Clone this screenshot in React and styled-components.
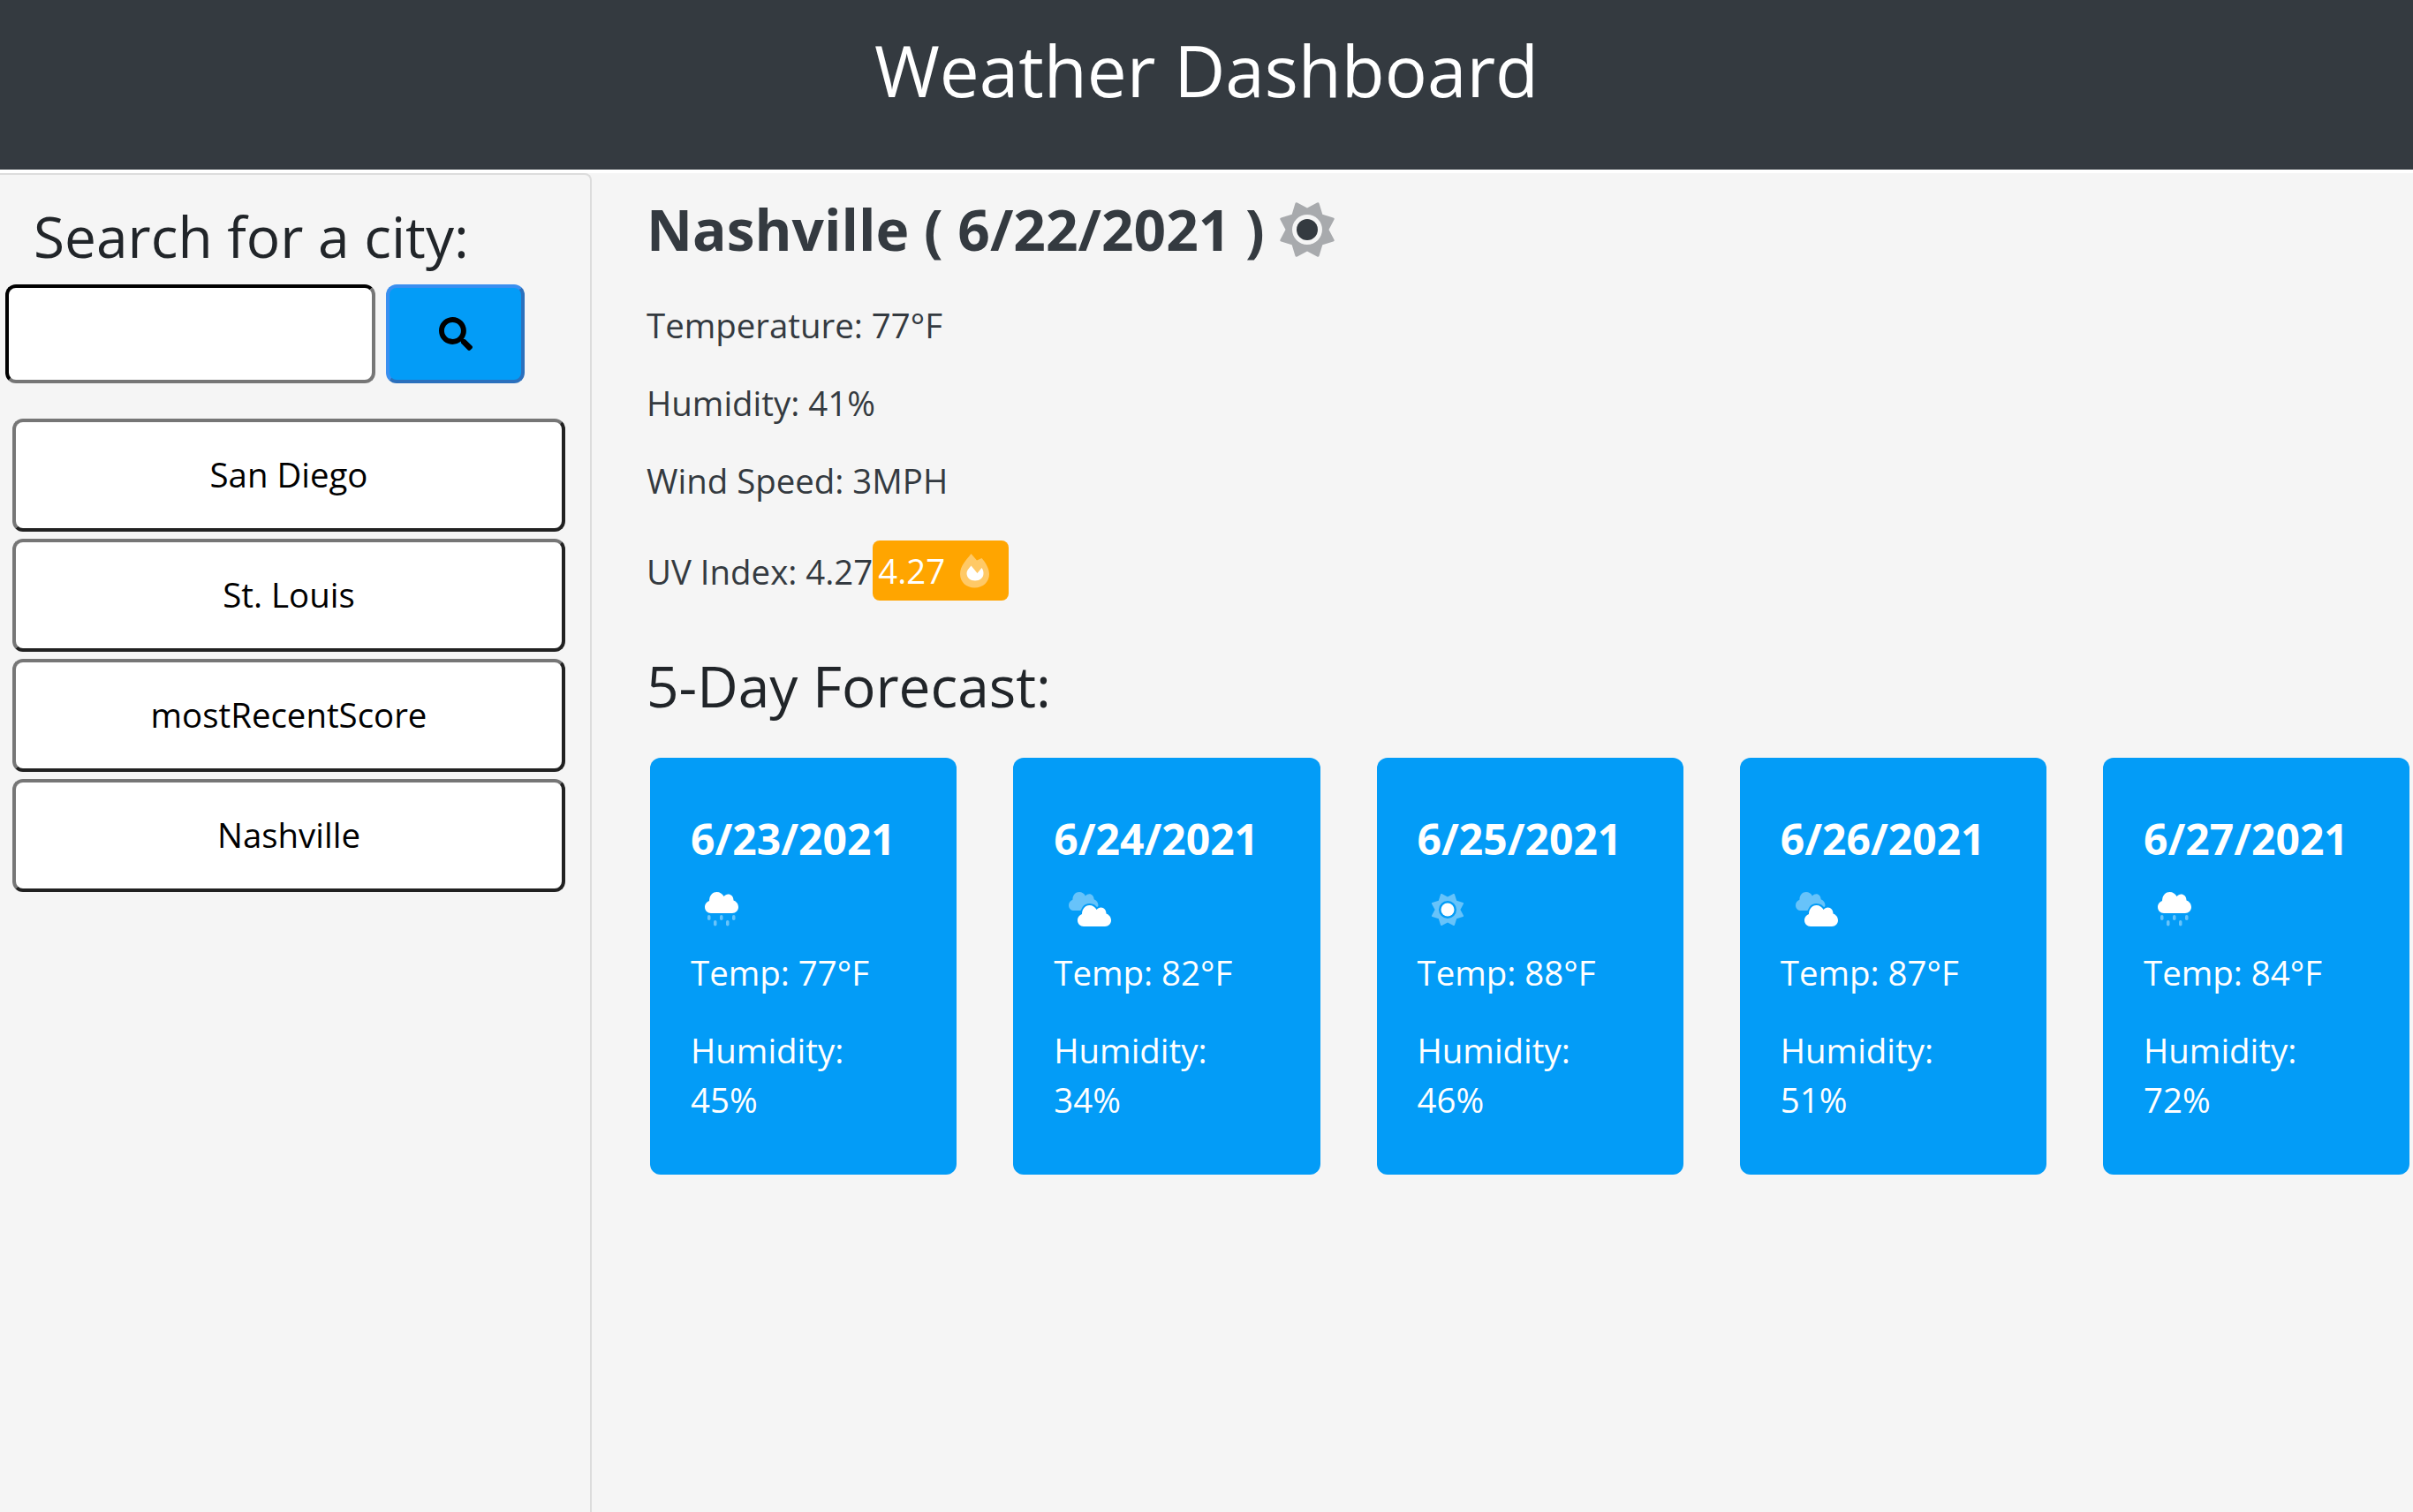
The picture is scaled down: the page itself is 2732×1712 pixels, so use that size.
import React from "react";
import styled, { createGlobalStyle } from "styled-components";
import { FaSearch } from "react-icons/fa";

const Global = createGlobalStyle`
  html, body { margin: 0; padding: 0; background: #fff; }
  body { font-family: "Open Sans", "Noto Sans", sans-serif; color: #343a40; }
  * { box-sizing: border-box; }
`;

const Page = styled.div`
  width: 2732px;
  height: 1712px;
  display: flex;
  flex-direction: column;
  overflow: hidden;
`;
const Header = styled.header`
  height: 192px;
  flex: none;
  background: #343a40;
  color: #fff;
  text-align: center;
  padding-top: 27px;
`;
const Title = styled.h1`
  margin: 0;
  font-size: 80px;
  line-height: 104px;
  font-weight: 400;
`;
const Body = styled.div`
  flex: 1;
  margin-top: 4px;
  display: flex;
  background: #f5f5f5;
  min-height: 0;
`;
const Sidebar = styled.aside`
  width: 670px;
  flex: none;
  border-top: 2px solid #dcdcdc;
  border-right: 2px solid #dcdcdc;
  border-top-right-radius: 8px;
  padding: 29px 0 0 6px;
`;
const SearchTitle = styled.h2`
  margin: 0 0 13px 32px;
  font-size: 64px;
  line-height: 82px;
  font-weight: 400;
  color: #212529;
`;
const SearchRow = styled.div`
  display: flex;
  gap: 12px;
`;
const SearchInput = styled.input`
  width: 419px;
  height: 112px;
  border-radius: 12px;
  border: 4px inset #767676;
  border-color: #212121 #767676 #767676 #212121;
  background: #fff;
`;
const SearchButton = styled.button`
  width: 157px;
  height: 112px;
  border-radius: 12px;
  border: 4px solid;
  border-color: #3a8ff0 #2b70bd #2b70bd #3a8ff0;
  background: #039cf7;
  display: flex;
  align-items: center;
  justify-content: center;
  color: #000;
  padding: 0;
`;
const CityList = styled.div`
  margin: 40px 0 0 8px;
  display: flex;
  flex-direction: column;
  gap: 8px;
`;
const CityButton = styled.button`
  width: 626px;
  height: 128px;
  border-radius: 12px;
  border: 4px solid;
  border-color: #767676 #212121 #212121 #767676;
  background: #fff;
  color: #000;
  font-family: inherit;
  font-size: 38.4px;
  padding: 0 0 2px;
`;
const Main = styled.main`
  flex: 1;
  min-width: 0;
  padding: 19px 0 0 62px;
`;
const CityHeading = styled.h2`
  margin: 0 0 35px;
  display: flex;
  align-items: center;
  gap: 14px;
  font-size: 64px;
  line-height: 90px;
  font-weight: 700;
  color: #343a40;
`;
const Stat = styled.p`
  margin: 0 0 32px;
  font-size: 38.4px;
  line-height: 56px;
`;
const UvRow = styled.div`
  display: flex;
  align-items: center;
  font-size: 38.4px;
  line-height: 68px;
  margin-top: 39px;
`;
const UvText = styled.span`
  padding-top: 2px;
`;
const Badge = styled.span`
  height: 68px;
  width: 154px;
  background: #ffa500;
  border-radius: 8px;
  color: #fff;
  display: flex;
  align-items: center;
  gap: 17px;
  padding: 0 0 0 6px;
  font-size: 38.4px;
`;
const ForecastTitle = styled.h3`
  margin: 57px 0 42px;
  font-size: 64px;
  line-height: 78px;
  font-weight: 400;
  color: #212529;
`;
const Cards = styled.div`
  display: flex;
  gap: 64px;
  margin-left: 4px;
`;
const Card = styled.article`
  width: 347.25px;
  height: 472px;
  flex: none;
  background: #039cf7;
  border-radius: 12px;
  color: #fff;
  padding: 60px 0 0 46px;
`;
const CardDate = styled.h5`
  margin: 0;
  font-size: 48px;
  line-height: 64px;
  font-weight: 700;
`;
const IconSlot = styled.div`
  height: 45px;
  margin: 28px 0 18px;
  display: flex;
  align-items: flex-start;
`;
const CardLine = styled.p`
  margin: 0 0 32px;
  font-size: 38.4px;
  line-height: 56px;
`;

function sunPath(size, R, r, hole) {
  const c = size / 2;
  const pts = [];
  for (let i = 0; i < 16; i++) {
    const a = ((i * 22.5 - 67.5) * Math.PI) / 180;
    const rad = i % 2 === 0 ? R : r;
    pts.push([c + rad * Math.cos(a), c + rad * Math.sin(a)]);
  }
  let d = "";
  for (let i = 0; i < 16; i += 2) {
    const tip = pts[i];
    const prev = pts[(i + 15) % 16];
    const next = pts[(i + 1) % 16];
    const lerp = (p, t) => [tip[0] + (p[0] - tip[0]) * t, tip[1] + (p[1] - tip[1]) * t];
    const a = lerp(prev, 0.14);
    const b = lerp(next, 0.14);
    d += `${i === 0 ? "M" : "L"}${a[0]} ${a[1]} Q${tip[0]} ${tip[1]} ${b[0]} ${b[1]} L${next[0]} ${next[1]} `;
  }
  d += `Z M${c - hole} ${c} a${hole} ${hole} 0 1 0 ${hole * 2} 0 a${hole} ${hole} 0 1 0 ${-hole * 2} 0 Z`;
  return d;
}

const Sun = ({ size, color, dot }) => (
  <svg width={size} height={size} viewBox={`0 0 ${size} ${size}`} style={{ flex: "none" }}>
    <path d={sunPath(size, size * 0.5, size * 0.36, size * 0.25)} fill={color} fillRule="evenodd" opacity="0.4" />
    <circle cx={size / 2} cy={size / 2} r={dot} fill={color} />
  </svg>
);

const CLOUD =
  "M7 24C3 24 0 21 0 17C0 13.5 2.5 11 5 10C5 4.5 8.5 0 13.5 0C17 0 20 2 21.5 5C23 3.5 24.5 2.5 26.5 2.5C30 2.5 32.5 5.5 32.5 9.5C35.5 10.5 38 13.5 38 17C38 21 35 24 31 24Z";

const CloudRain = () => (
  <svg width="38" height="40" viewBox="0 0 38 40" style={{ marginLeft: 16 }}>
    <path d={CLOUD} fill="#fff" />
    <g fill="#fff" opacity="0.4">
      <rect x="3" y="26" width="3.5" height="6" rx="1.75" />
      <rect x="10" y="32" width="3.5" height="6.5" rx="1.75" />
      <rect x="17" y="26" width="3.5" height="6" rx="1.75" />
      <rect x="24" y="32" width="3.5" height="6.5" rx="1.75" />
      <rect x="31" y="26" width="3.5" height="6" rx="1.75" />
    </g>
  </svg>
);

const Clouds = () => (
  <svg width="50" height="40" viewBox="0 0 50 40" style={{ marginLeft: 17 }}>
    <path d={CLOUD} fill="#fff" opacity="0.4" transform="scale(0.88)" />
    <path d={CLOUD} fill="#fff" stroke="#039cf7" strokeWidth="4" paintOrder="stroke" transform="translate(10 15)" />
  </svg>
);

const Flame = () => (
  <svg width="34" height="39" viewBox="0 0 34 39" style={{ flex: "none" }}>
    <path
      d="M12.5 0L19 7.5L24.5 5C29 10 33 17 33 23C33 32 26 38.5 16.5 38.5C7 38.5 0 32 0 23C0 14 7 7 12.5 0Z"
      fill="#fff"
      opacity="0.4"
    />
    <path
      d="M12.5 13.5L19.5 22L24.5 16C26 18 26.5 20 26.5 22C26.5 27.5 22.5 30.5 17 30.5C11.5 30.5 7.5 27 7.5 22C7.5 19 10 16.5 12.5 13.5Z"
      fill="#fff"
    />
  </svg>
);

const SunSlot = styled.span`
  margin-left: 14px;
  display: flex;
`;

const cities = ["San Diego", "St. Louis", "mostRecentScore", "Nashville"];
const forecast = [
  { date: "6/23/2021", icon: "rain", temp: 77, hum: 45 },
  { date: "6/24/2021", icon: "clouds", temp: 82, hum: 34 },
  { date: "6/25/2021", icon: "sun", temp: 88, hum: 46 },
  { date: "6/26/2021", icon: "clouds", temp: 87, hum: 51 },
  { date: "6/27/2021", icon: "rain", temp: 84, hum: 72 },
];

const CardIcon = ({ kind }) => {
  if (kind === "rain") return <CloudRain />;
  if (kind === "clouds") return <Clouds />;
  return (
    <SunSlot>
      <Sun size={40} color="#fff" dot={7.5} />
    </SunSlot>
  );
};

export default function App() {
  return (
    <Page>
      <Global />
      <Header>
        <Title>Weather Dashboard</Title>
      </Header>
      <Body>
        <Sidebar>
          <SearchTitle>Search for a city:</SearchTitle>
          <SearchRow>
            <SearchInput type="text" />
            <SearchButton aria-label="Search">
              <FaSearch size={38} />
            </SearchButton>
          </SearchRow>
          <CityList>
            {cities.map((c) => (
              <CityButton key={c}>{c}</CityButton>
            ))}
          </CityList>
        </Sidebar>
        <Main>
          <CityHeading>
            <span>Nashville ( 6/22/2021 )</span>
            <Sun size={68} color="#343a40" dot={12} />
          </CityHeading>
          <Stat>Temperature: 77°F</Stat>
          <Stat>Humidity: 41%</Stat>
          <Stat>Wind Speed: 3MPH</Stat>
          <UvRow>
            <UvText>UV Index: 4.27</UvText>
            <Badge>
              4.27
              <Flame />
            </Badge>
          </UvRow>
          <ForecastTitle>5-Day Forecast:</ForecastTitle>
          <Cards>
            {forecast.map((f) => (
              <Card key={f.date}>
                <CardDate>{f.date}</CardDate>
                <IconSlot>
                  <CardIcon kind={f.icon} />
                </IconSlot>
                <CardLine>Temp: {f.temp}°F</CardLine>
                <CardLine>
                  Humidity:
                  <br />
                  {f.hum}%
                </CardLine>
              </Card>
            ))}
          </Cards>
        </Main>
      </Body>
    </Page>
  );
}
